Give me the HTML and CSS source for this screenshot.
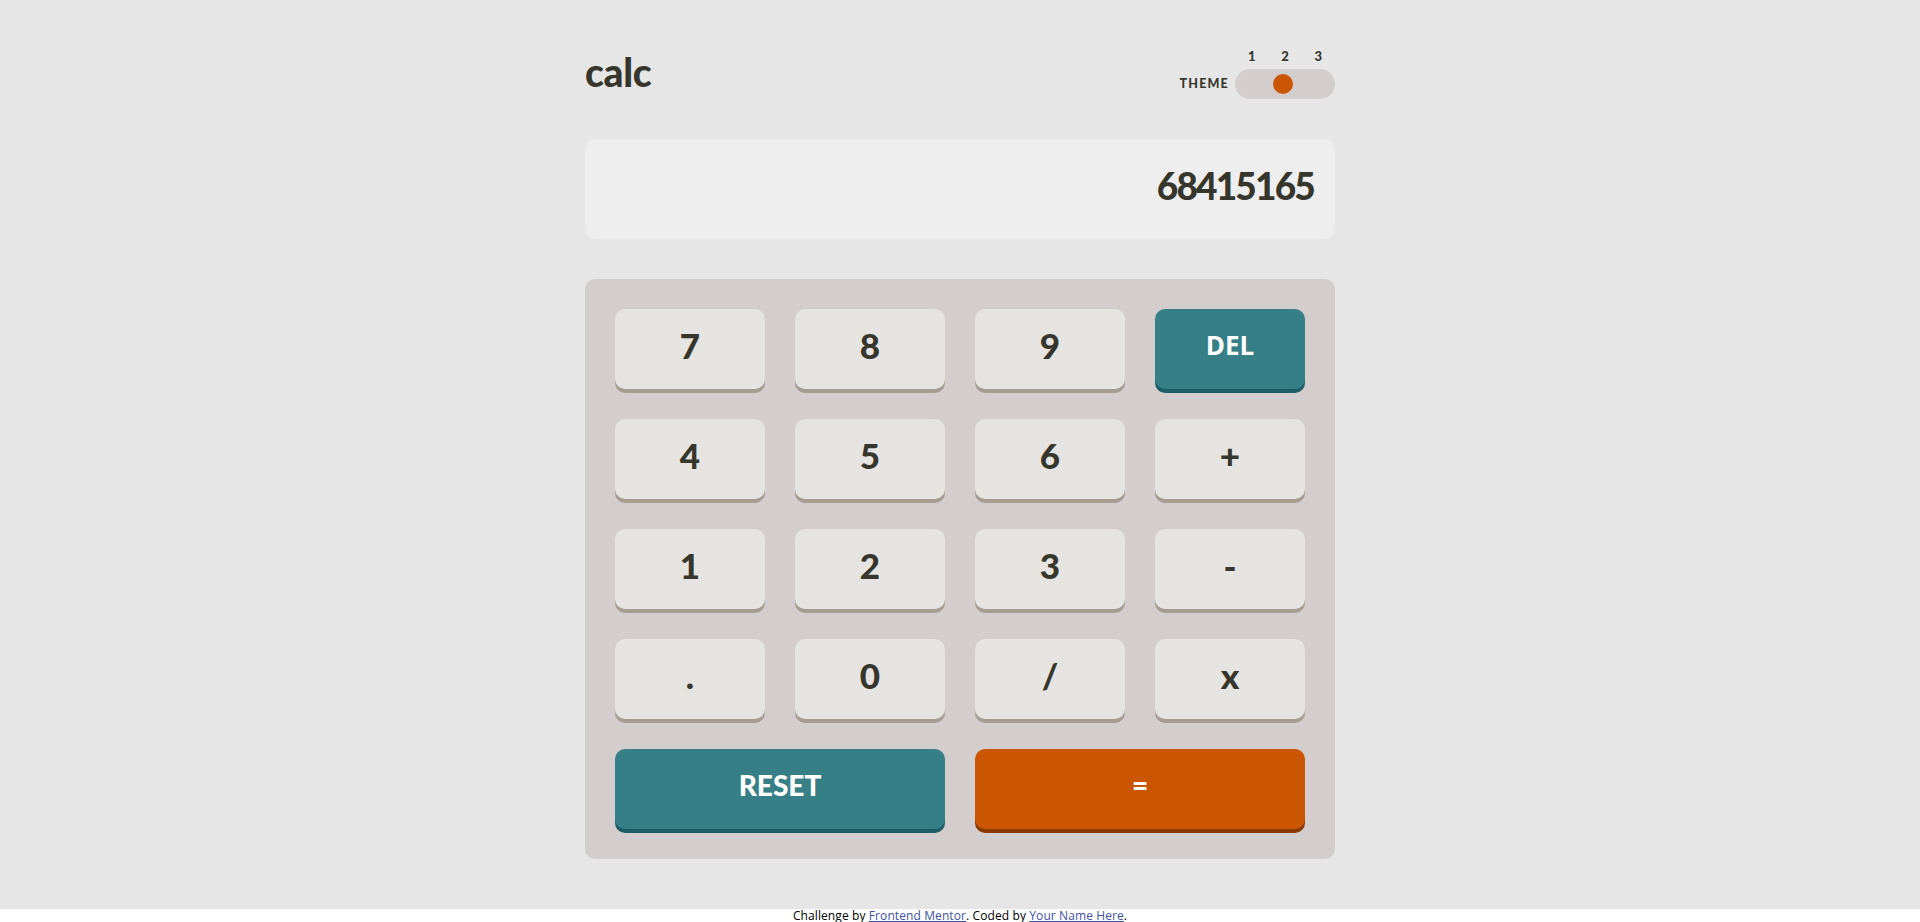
FILE: index.html
```html
<!DOCTYPE html>
<html lang="en">
<head>
<meta charset="UTF-8">
<title>Calculator app</title>
<link rel="stylesheet" href="styles.css">
</head>
<body>
<main class="main">
  <div class="calc">
    <header class="header">
      <h1 class="logo">calc</h1>
      <div class="theme">
        <span class="theme-label">THEME</span>
        <div class="switch-col">
          <div class="nums"><span>1</span><span>2</span><span>3</span></div>
          <div class="switch"><span class="knob"></span></div>
        </div>
      </div>
    </header>
    <section class="screen">68415165</section>
    <section class="keypad">
      <button class="key">7</button>
      <button class="key">8</button>
      <button class="key">9</button>
      <button class="key key-del">DEL</button>
      <button class="key">4</button>
      <button class="key">5</button>
      <button class="key">6</button>
      <button class="key">+</button>
      <button class="key">1</button>
      <button class="key">2</button>
      <button class="key">3</button>
      <button class="key">-</button>
      <button class="key">.</button>
      <button class="key">0</button>
      <button class="key">/</button>
      <button class="key">x</button>
      <button class="key key-wide key-reset">RESET</button>
      <button class="key key-wide key-equal">=</button>
    </section>
  </div>
</main>
<footer class="attribution">
  Challenge by <a href="#">Frontend Mentor</a>. Coded by <a href="#">Your Name Here</a>.
</footer>
</body>
</html>
```

FILE: styles.css
```css
* { box-sizing: border-box; }
html, body { margin: 0; padding: 0; }
body {
  background: #ffffff;
  font-family: Lato, "Noto Sans", sans-serif;
  color: #36362c;
}
.main {
  background: #e6e6e6;
  height: 909px;
  padding-top: 48px;
}
.calc {
  width: 750px;
  margin: 0 auto;
}
.header {
  display: flex;
  justify-content: space-between;
  align-items: flex-end;
}
.logo {
  margin: 0 0 11px 0;
  font-size: 39px;
  line-height: 32px;
  font-weight: 900;
  letter-spacing: -0.3px;
  color: #36362c;
}
.theme {
  display: flex;
  align-items: flex-end;
  gap: 6px;
}
.theme-label {
  font-size: 12.5px;
  font-weight: 900;
  letter-spacing: 1.2px;
  line-height: 30px;
}
.switch-col {
  display: flex;
  flex-direction: column;
  gap: 5px;
  width: 100px;
}
.nums {
  display: grid;
  grid-template-columns: 1fr 1fr 1fr;
  text-align: center;
  font-size: 13px;
  font-weight: 900;
  line-height: 16px;
}
.switch {
  height: 30px;
  border-radius: 15px;
  background: #d3cdcd;
  display: flex;
  align-items: center;
  justify-content: center;
  padding-right: 4px;
}
.knob {
  width: 20px;
  height: 20px;
  border-radius: 50%;
  background: #ca5502;
}
.screen {
  margin-top: 40px;
  height: 100px;
  border-radius: 10px;
  background: #eeeeee;
  display: flex;
  align-items: center;
  justify-content: flex-end;
  padding: 0 21px 8px 0;
  font-size: 37px;
  font-weight: 900;
  letter-spacing: -1.8px;
  color: #36362c;
}
.keypad {
  margin-top: 40px;
  background: #d3cdcd;
  border-radius: 10px;
  padding: 30px;
  display: grid;
  grid-template-columns: repeat(4, 150px);
  grid-auto-rows: 80px;
  gap: 30px;
}
.key {
  border: none;
  border-radius: 10px;
  background: #e5e4e1;
  box-shadow: 0 4px 0 #a69d91;
  font-family: Lato, "Noto Sans", sans-serif;
  font-size: 35px;
  font-weight: 900;
  color: #36362c;
  padding: 0 0 8px 0;
  cursor: pointer;
}
.key-del {
  background: #377f86;
  box-shadow: 0 4px 0 #1b5f65;
  color: #ffffff;
  font-family: "Open Sans", sans-serif;
  font-weight: 700;
  font-size: 26px;
}
.key-wide { grid-column: span 2; }
.key-reset {
  background: #377f86;
  box-shadow: 0 4px 0 #1b5f65;
  color: #ffffff;
  font-size: 28px;
}
.key-equal {
  background: #ca5502;
  box-shadow: 0 4px 0 #893901;
  color: #ffffff;
  font-size: 28px;
}
.attribution {
  font-family: "Open Sans", sans-serif;
  font-size: 12px;
  line-height: 13px;
  text-align: center;
  color: #000000;
  letter-spacing: 0.1px;
}
.attribution a { color: #3e52a3; }
```
